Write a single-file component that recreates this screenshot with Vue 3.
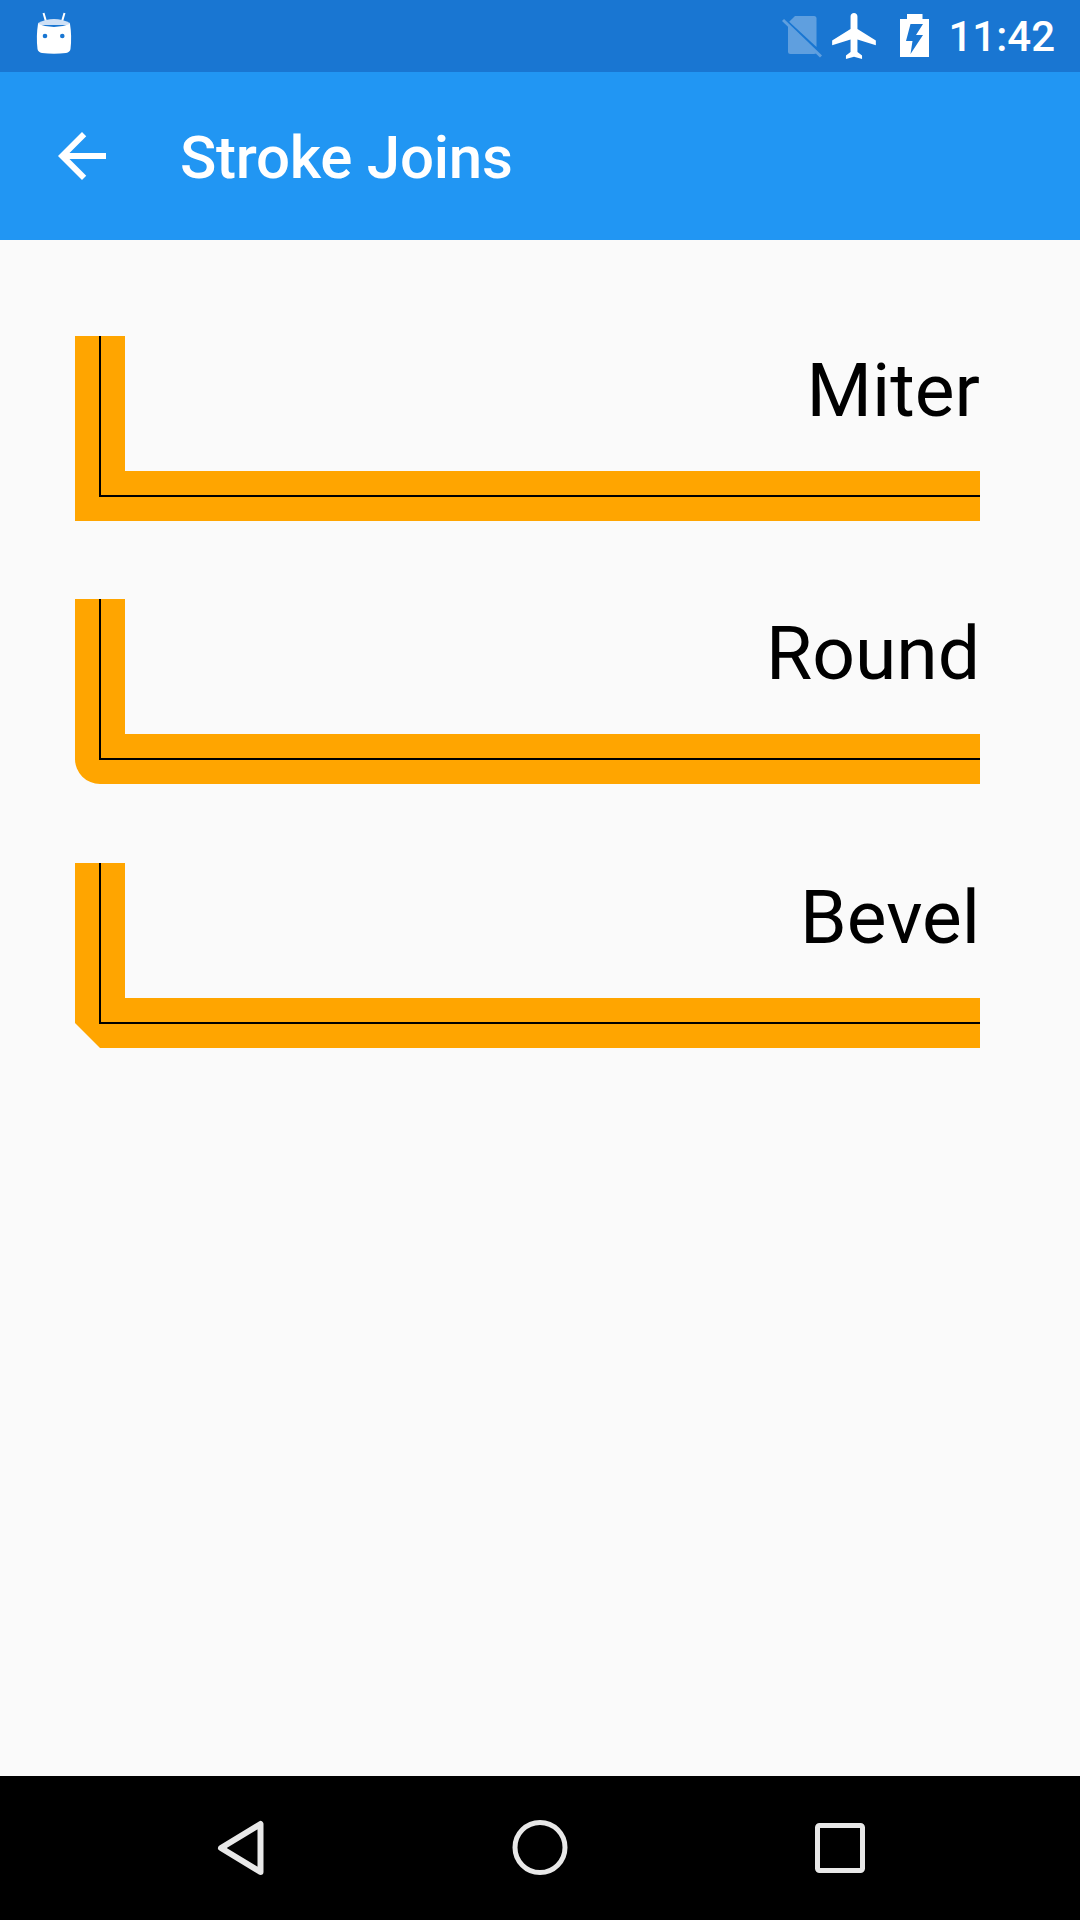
<script setup>
const rows = [
  { label: 'Miter', linejoin: 'miter' },
  { label: 'Round', linejoin: 'round' },
  { label: 'Bevel', linejoin: 'bevel' }
]
const strokePath = 'M25 0V160H905'
</script>

<template>
  <main class="screen">
    <div class="status-bar">
      <svg class="status-app" width="60" height="60" viewBox="0 0 60 60">
        <path d="M18.500 7l2.500 8.500M39.500 7L37 15.500" stroke="#fff" stroke-width="2" fill="none" />
        <path d="M13 17Q29 9 45 17V19H13z" fill="#cfe0f5" />
        <path d="M13 18Q29 24 45 18Q47 30 45.500 43Q45 46 41 47Q29 48.500 17 47Q13 46 12.500 43Q11 30 13 18z" fill="#fff" />
        <circle cx="20" cy="30" r="2.300" fill="#1976d2" />
        <circle cx="37.300" cy="30" r="2.300" fill="#1976d2" />
      </svg>
      <div class="status-right">
        <svg class="no-sim" width="42" height="44" viewBox="0 0 42 44">
          <g opacity="0.3" fill="#fff">
            <path d="M13 2H32Q34.500 2 34.500 4.500V33L7.200 7.800z" />
            <path d="M6 10.600L34.500 37V37.500Q34.500 40 32 40H8.500Q6 40 6 37.500z" />
            <path d="M1 6L39 42.500" stroke="#fff" stroke-width="3" fill="none" />
          </g>
        </svg>
        <svg class="plane" width="44" height="46" viewBox="2 2 19 20">
          <path d="M21 16v-2l-8-5V3.500c0-.83-.67-1.500-1.500-1.500S10 2.670 10 3.500V9l-8 5v2l8-2.500V19l-2 1.500V22l3.500-1 3.500 1v-1.500L13 19v-5.500l8 2.500z" fill="#fff" />
        </svg>
        <svg class="battery" width="29" height="44" viewBox="0 0 29 44">
          <path fill-rule="evenodd" fill="#fff" d="M7 0H22.500V5H29V43H0V5H7zM10.500 10L6 27H12.500L10.500 40L23 21H16L23 10z" />
        </svg>
        <span class="clock">11:42</span>
      </div>
    </div>

    <header class="app-bar">
      <svg class="back" width="72" height="72" viewBox="0 0 24 24">
        <path d="M20 11H7.830l5.590-5.590L12 4l-8 8 8 8 1.410-1.410L7.830 13H20v-2z" fill="#fff" />
      </svg>
      <h1 class="title">Stroke Joins</h1>
    </header>

    <section class="content">
      <svg
        v-for="row in rows"
        :key="row.label"
        class="join-row"
        width="905"
        height="186"
        viewBox="0 0 905 186"
      >
        <path :d="strokePath" fill="none" stroke="#ffa500" stroke-width="50" :stroke-linejoin="row.linejoin" stroke-miterlimit="10" />
        <path :d="strokePath" fill="none" stroke="#000" stroke-width="2" />
        <text class="join-label" x="905" y="80" text-anchor="end">{{ row.label }}</text>
      </svg>
    </section>

    <nav class="nav-bar">
      <svg width="72" height="72" viewBox="0 0 72 72">
        <path d="M56.500 12V60L17 36z" fill="none" stroke="#e8e8e8" stroke-width="6" stroke-linejoin="round" />
      </svg>
      <svg width="72" height="72" viewBox="0 0 72 72">
        <circle cx="36" cy="35.500" r="25" fill="none" stroke="#e8e8e8" stroke-width="5" />
      </svg>
      <svg width="72" height="72" viewBox="0 0 72 72">
        <rect x="13.500" y="13.500" width="45" height="45" rx="2" fill="none" stroke="#e8e8e8" stroke-width="5" />
      </svg>
    </nav>
  </main>
</template>

<style>
body {
  margin: 0;
}
</style>

<style scoped>
.screen {
  display: flex;
  flex-direction: column;
  width: 1080px;
  height: 1920px;
  background: #fafafa;
  font-family: Roboto, sans-serif;
  overflow: hidden;
}
.status-bar {
  display: flex;
  align-items: center;
  justify-content: space-between;
  flex: 0 0 72px;
  padding: 0 25px;
  background: #1976d2;
}
.status-right {
  display: flex;
  align-items: center;
  color: #fff;
}
.no-sim {
  margin-right: 8px;
}
.plane {
  margin-right: 24px;
}
.battery {
  margin-right: 19px;
}
.clock {
  font-size: 42px;
  font-weight: 500;
}
.app-bar {
  display: flex;
  align-items: center;
  flex: 0 0 168px;
  padding-left: 46px;
  background: #2196f3;
}
.title {
  margin: 2px 0 0 62px;
  font-size: 60px;
  font-weight: 500;
  letter-spacing: -0.25px;
  color: #fff;
}
.content {
  display: flex;
  flex: 1;
  flex-direction: column;
  gap: 77.4px;
  padding: 96px 0 0 75px;
}
.join-row {
  display: block;
}
.join-label {
  font-size: 75px;
  fill: #000;
}
.nav-bar {
  display: flex;
  align-items: center;
  justify-content: space-between;
  flex: 0 0 144px;
  padding: 0 204px;
  background: #000;
}
</style>
